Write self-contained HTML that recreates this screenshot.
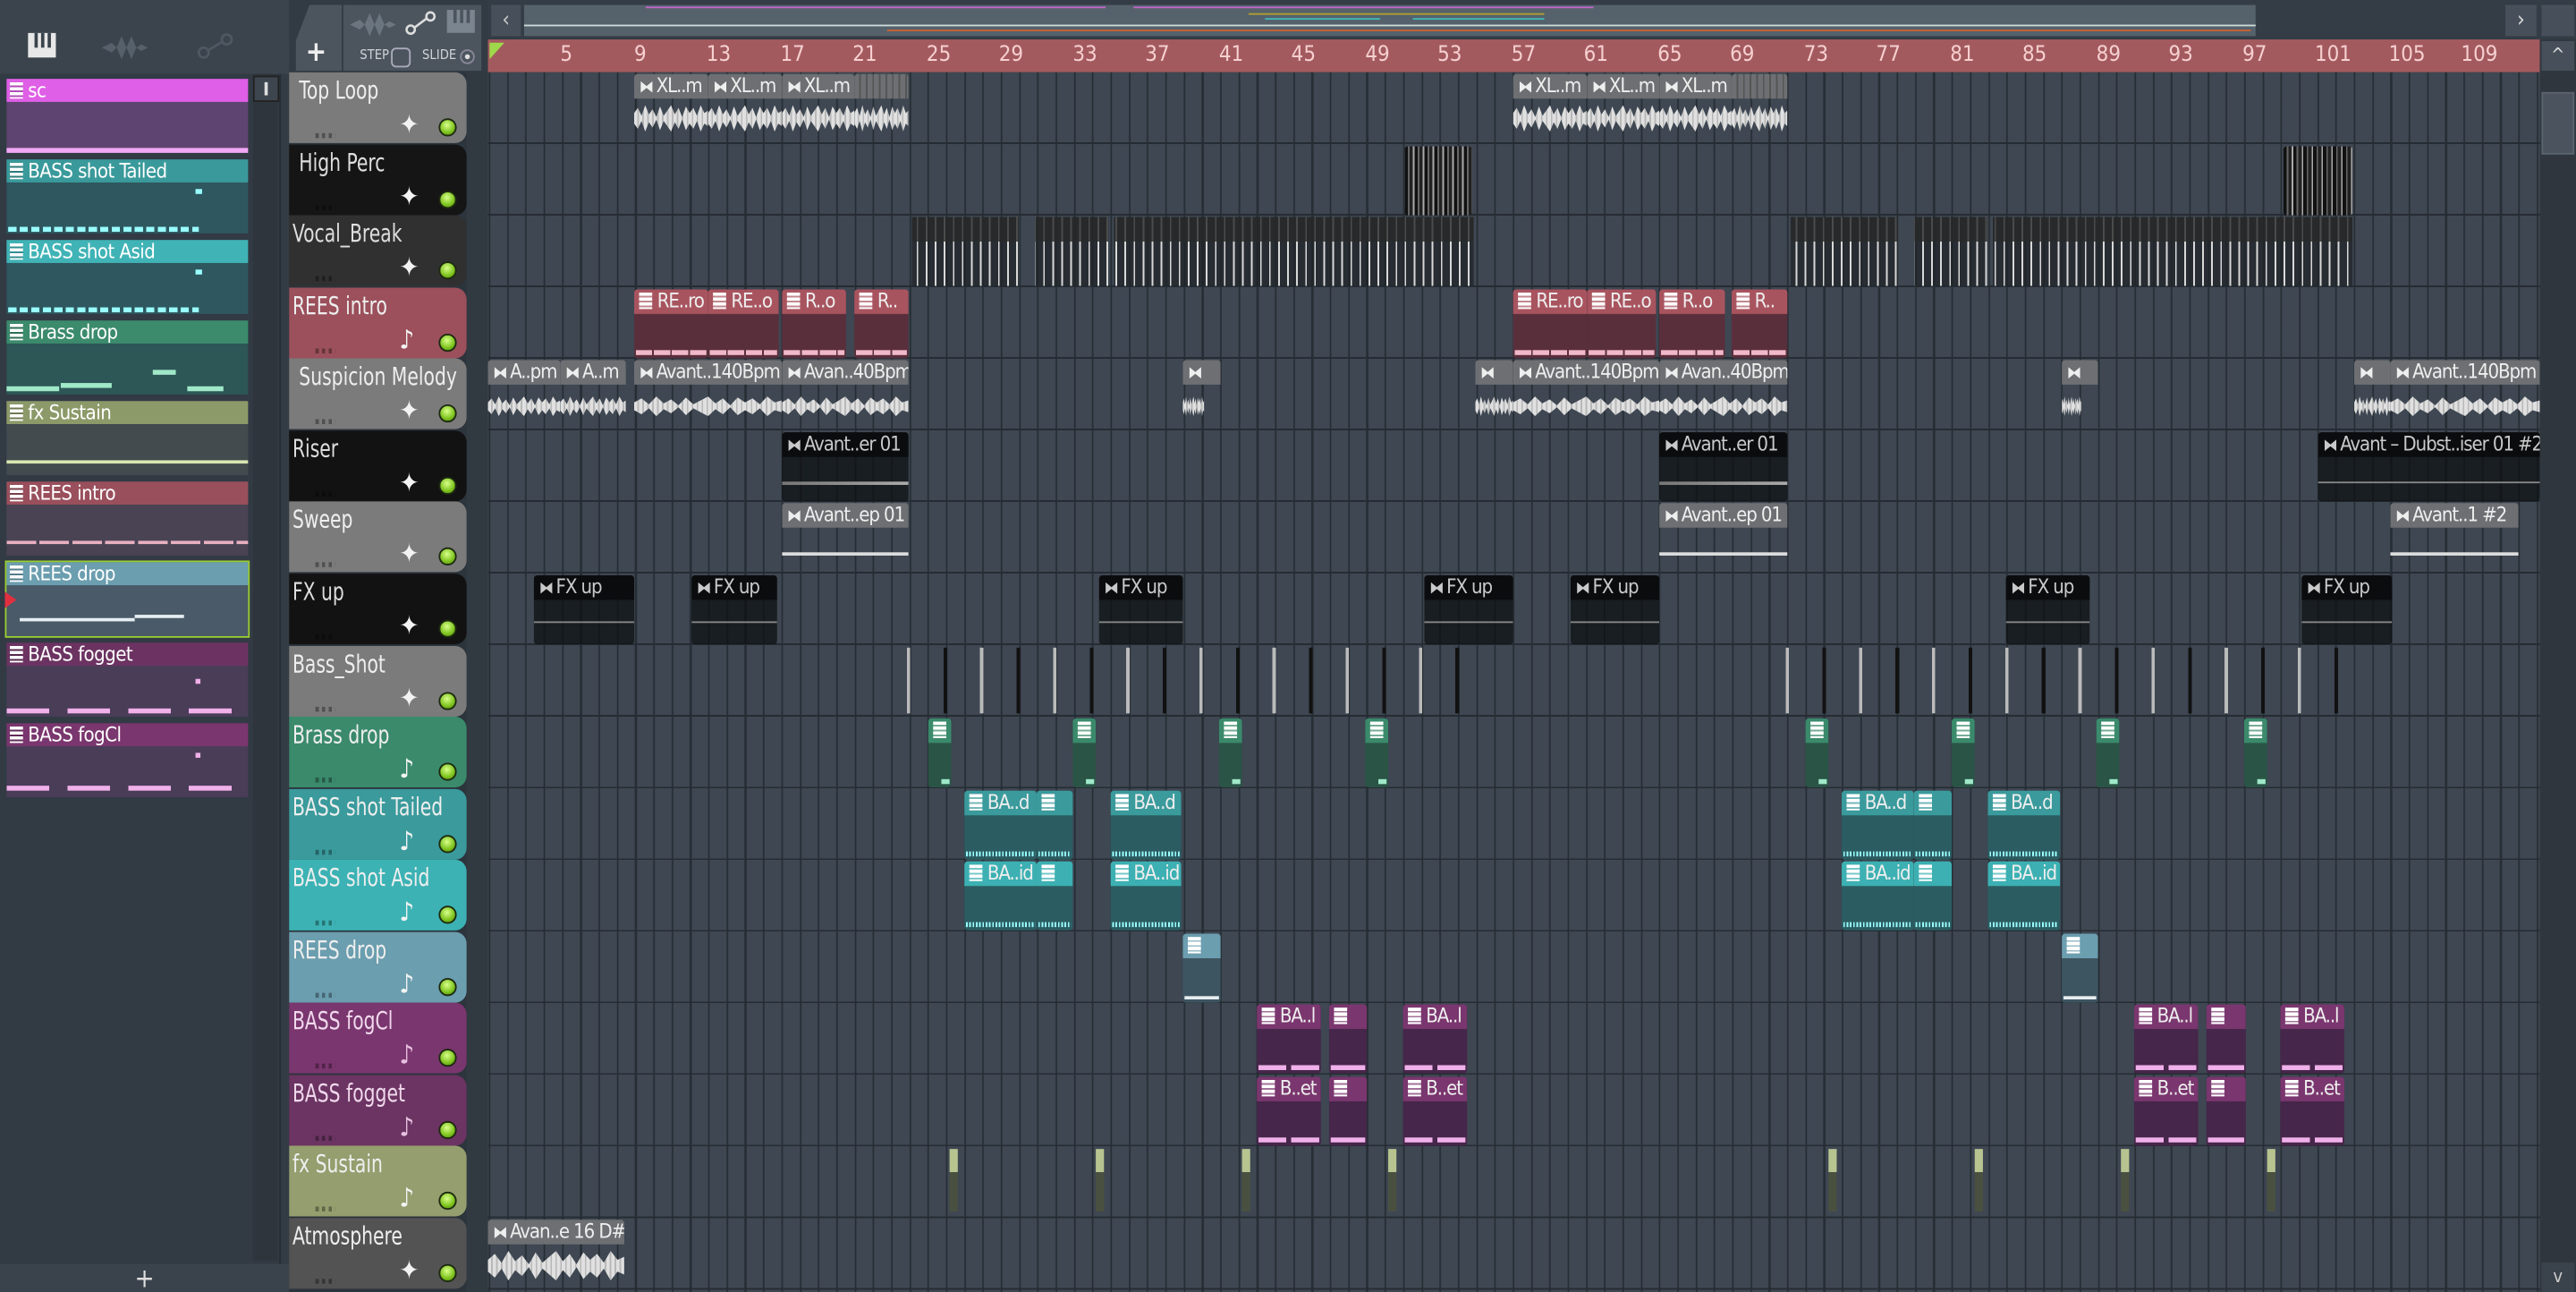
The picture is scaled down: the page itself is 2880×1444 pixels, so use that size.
<!DOCTYPE html>
<html><head><meta charset="utf-8"><style>
html,body{margin:0;padding:0;width:2880px;height:1444px;overflow:hidden;background:#323a43}
#s{position:absolute;left:0;top:0;width:1568px;height:786px;transform:scale(1.83673,1.83715);transform-origin:0 0;font-family:"Liberation Sans Narrow","DejaVu Sans Condensed","Liberation Sans",sans-serif;background:#3a434c;overflow:hidden}
.a{position:absolute}
.grid{position:absolute;left:297px;top:44px;width:1249px;height:742px;background-color:#3e4752;
background-image:repeating-linear-gradient(180deg,transparent 0 42.56px,#262c33 42.56px 43.56px),repeating-linear-gradient(90deg,#262d34 0 1px,transparent 1px 11.13px);background-position:0 0,0.5px 0}
.th{position:absolute;left:176px;width:108px;height:43px;border-radius:0 7px 7px 0;color:#eee;font-size:15px;overflow:hidden}
.th b{position:absolute;left:6px;top:2px;font-weight:normal;white-space:nowrap;transform:scaleX(.82);transform-origin:0 0}
.th i{position:absolute;left:16px;bottom:3px;width:12px;height:3px;background:repeating-linear-gradient(90deg,rgba(0,0,0,.35) 0 2px,transparent 2px 4px)}
.led{position:absolute;left:91px;bottom:4px;width:9px;height:9px;border-radius:50%;background:radial-gradient(circle at 45% 35%,#d8ff8a,#7cc21c 60%,#4a7a10);border:1px solid #1d2a10}
.ic{position:absolute;left:67px;bottom:4px;width:16px;height:14px;color:#f3f3f3;font-size:16px;line-height:14px}
.c{position:absolute;overflow:hidden;border-radius:2px;height:42px;box-sizing:border-box}
.c .h{height:15px;font-size:12px;line-height:15px;color:#eee;padding-left:3px;white-space:nowrap;overflow:hidden;border-radius:2px 2px 0 0;letter-spacing:-0.6px}
.g .h{background:#6d6f72}
.d .h{background:#0b0c0e;color:#c9c9c9}
.d{background:rgba(14,16,19,.75)}
.wv{position:absolute;left:0;right:0;top:19px;height:16px;background:repeating-linear-gradient(90deg,#e0e0e0 0 2px,#b8b8b8 2px 3px);clip-path:polygon(0 30%,5% 10%,10% 40%,15% 0,20% 35%,25% 15%,30% 45%,35% 5%,40% 40%,45% 20%,50% 0,55% 35%,60% 10%,65% 45%,70% 5%,75% 30%,80% 10%,85% 40%,90% 0,95% 30%,100% 20%,100% 80%,95% 70%,90% 100%,85% 60%,80% 90%,75% 70%,70% 95%,65% 55%,60% 90%,55% 65%,50% 100%,45% 80%,40% 60%,35% 95%,30% 55%,25% 85%,20% 65%,15% 100%,10% 60%,5% 90%,0 70%)}
.ar{font-size:10px;margin-right:2px}
.pi{display:inline-block;width:8px;height:10px;vertical-align:-1px;margin-right:3px;background:repeating-linear-gradient(180deg,#fff 0 2px,rgba(255,255,255,.3) 2px 3px)}
.p .b{position:absolute;left:0;right:0;top:15px;bottom:0}
.p .n{position:absolute;left:1px;right:1px;bottom:2px;height:3px}
.ch{position:absolute;left:4px;width:147px;height:45px}
.ch .h{height:14px;font-size:12px;line-height:14px;color:#fff;padding-left:2px;white-space:nowrap;letter-spacing:-0.3px}
.ch .h .pi{width:8px;height:10px;background:repeating-linear-gradient(180deg,#fff 0 2px,rgba(0,0,0,.2) 2px 3px)}
.rl{position:absolute;top:26px;font-size:13px;color:#f6d0d0}
</style></head><body><div id="s">

<div class="a" style="left:0;top:0;width:176px;height:45px;background:#3b444d"></div>
<svg class="a" style="left:17px;top:20px" width="18" height="16"><rect x="0" y="0" width="17" height="15" fill="#e8e8e8"/><rect x="4" y="0" width="2" height="9" fill="#3b444d"/><rect x="8" y="0" width="2" height="9" fill="#3b444d"/><rect x="12" y="0" width="2" height="9" fill="#3b444d"/></svg>
<svg class="a" style="left:62px;top:20px" width="28" height="18"><path d="M0 9 L6 6 L9 9 L12 2 L15 9 L18 16 L21 9 L24 7 L28 9 L24 11 L21 9 L18 2 L15 9 L12 16 L9 9 L6 12Z" fill="#56606a"/></svg>
<svg class="a" style="left:120px;top:20px" width="22" height="16"><circle cx="4" cy="12" r="3" fill="none" stroke="#4e5862" stroke-width="1.5"/><circle cx="18" cy="4" r="3" fill="none" stroke="#4e5862" stroke-width="1.5"/><line x1="6" y1="11" x2="16" y2="5" stroke="#4e5862" stroke-width="1.5"/></svg>

<div class="a" style="left:0;top:45px;width:176px;height:741px;background:#333c45"></div>
<div class="a" style="left:0;top:45px;width:170px;height:724px;background:#323a44;border-right:1px solid #262c33"></div>
<div class="a" style="left:154px;top:45px;width:15px;height:722px;background:#2e353d"></div>
<div class="a" style="left:154px;top:46px;width:14px;height:14px;background:#3d464f;border:1px solid #222"><div class="a" style="left:6px;top:3px;width:2px;height:8px;background:#ddd"></div></div>
<div class="a" style="left:0;top:769px;width:176px;height:17px;background:#3a434c;color:#ddd;font-size:16px;line-height:17px;text-align:center">+</div>

<div class="ch" style="top:48px;background:#5e4470"><div class="h" style="background:#df5fe6"><span class="pi"></span>sc</div><div class="a" style="left:0;right:0;bottom:0;height:3px;background:#f2a8f4"></div></div>
<div class="ch" style="top:97px;background:#2f575f"><div class="h" style="background:#3a9a9b"><span class="pi"></span>BASS shot Tailed</div><div class="a" style="left:1px;right:30px;bottom:1px;height:3px;background:repeating-linear-gradient(90deg,#9ff 0 5px,transparent 5px 7px)"></div><div class="a" style="left:115px;top:18px;width:4px;height:3px;background:#9ff"></div></div>
<div class="ch" style="top:146px;background:#2f575f"><div class="h" style="background:#40b3b6"><span class="pi"></span>BASS shot Asid</div><div class="a" style="left:1px;right:30px;bottom:1px;height:3px;background:repeating-linear-gradient(90deg,#9ff 0 5px,transparent 5px 7px)"></div><div class="a" style="left:115px;top:18px;width:4px;height:3px;background:#9ff"></div></div>
<div class="ch" style="top:195px;background:#2d5656"><div class="h" style="background:#3b8b6c"><span class="pi"></span>Brass drop</div><div class="a" style="left:0;top:40px;width:32px;height:3px;background:#9fe8c8"></div><div class="a" style="left:33px;top:38px;width:31px;height:3px;background:#9fe8c8"></div><div class="a" style="left:89px;top:30px;width:14px;height:3px;background:#9fe8c8"></div><div class="a" style="left:110px;top:40px;width:22px;height:3px;background:#9fe8c8"></div></div>
<div class="ch" style="top:244px;background:#434b4f"><div class="h" style="background:#8c9a69"><span class="pi"></span>fx Sustain</div><div class="a" style="left:0;right:0;top:36px;height:2px;background:#d8e6b0"></div></div>
<div class="ch" style="top:293px;background:#4a4354"><div class="h" style="background:#9a4f5c"><span class="pi"></span>REES intro</div><div class="a" style="left:0;right:0;top:36px;height:2px;background:repeating-linear-gradient(90deg,#e8b0c0 0 18px,transparent 18px 20px)"></div></div>
<div class="ch" style="top:342px;background:#4a5a68;outline:1px solid #9acd32"><div class="h" style="background:#6b9eaf"><span class="pi"></span>REES drop</div><div class="a" style="left:8px;top:34px;width:70px;height:2px;background:#e6eef2"></div><div class="a" style="left:78px;top:32px;width:30px;height:2px;background:#e6eef2"></div><div class="a" style="left:-1px;top:18px;width:0;height:0;border-left:7px solid #e03040;border-top:5px solid transparent;border-bottom:5px solid transparent"></div></div>
<div class="ch" style="top:391px;background:#4a3d58"><div class="h" style="background:#6c3362"><span class="pi"></span>BASS fogget</div><div class="a" style="left:0;right:0;top:40px;height:3px;background:repeating-linear-gradient(90deg,#f0b0ea 0 26px,transparent 26px 37px)"></div><div class="a" style="left:115px;top:22px;width:3px;height:3px;background:#f0b0ea"></div></div>
<div class="ch" style="top:440px;background:#4a3d58"><div class="h" style="background:#7a366e"><span class="pi"></span>BASS fogCl</div><div class="a" style="left:0;right:0;top:38px;height:3px;background:repeating-linear-gradient(90deg,#f0b0ea 0 26px,transparent 26px 37px)"></div><div class="a" style="left:115px;top:18px;width:3px;height:3px;background:#f0b0ea"></div></div>

<div class="a" style="left:176px;top:0;width:121px;height:44px;background:#323a43"></div>
<div class="a" style="left:180px;top:3px;width:28px;height:40px;background:#4c555e;border-radius:8px 0 0 0;clip-path:polygon(30% 0,100% 0,100% 100%,0 100%,0 55%)"></div>
<div class="a" style="left:186px;top:22px;color:#eee;font-size:17px;font-weight:bold">+</div>
<div class="a" style="left:209px;top:3px;width:84px;height:40px;background:#4c555e"></div>
<svg class="a" style="left:213px;top:6px" width="28" height="18"><path d="M0 9 L6 6 L9 9 L12 2 L15 9 L18 16 L21 9 L24 7 L28 9 L24 11 L21 9 L18 2 L15 9 L12 16 L9 9 L6 12Z" fill="#6b757f"/></svg>
<svg class="a" style="left:246px;top:6px" width="20" height="16"><circle cx="4" cy="12" r="2.5" fill="none" stroke="#ddd" stroke-width="1.4"/><circle cx="16" cy="4" r="2.5" fill="none" stroke="#ddd" stroke-width="1.4"/><line x1="6" y1="11" x2="14" y2="5" stroke="#ddd" stroke-width="1.4"/></svg>
<svg class="a" style="left:272px;top:6px" width="18" height="15"><rect width="17" height="14" fill="#7b858f"/><rect x="4" width="2" height="8" fill="#4c555e"/><rect x="8" width="2" height="8" fill="#4c555e"/><rect x="12" width="2" height="8" fill="#4c555e"/></svg>
<div class="a" style="left:219px;top:29px;color:#cfd4d8;font-size:8px">STEP</div>
<div class="a" style="left:238px;top:29px;width:10px;height:10px;border:1px solid #aab;border-radius:3px"></div>
<div class="a" style="left:257px;top:29px;color:#cfd4d8;font-size:8px">SLIDE</div>
<div class="a" style="left:280px;top:30px;width:7px;height:7px;border:1px solid #889;border-radius:50%"><div class="a" style="left:2px;top:2px;width:3px;height:3px;border-radius:50%;background:#ddd"></div></div>

<div class="a" style="left:297px;top:0;width:1271px;height:24px;background:#343c45"></div>
<div class="a" style="left:299px;top:3px;width:18px;height:19px;background:#47505a;color:#ccc;font-size:13px;text-align:center;line-height:19px">‹</div>
<div class="a" style="left:319px;top:3px;width:1054px;height:19px;background:#55616b"></div>
<div class="a" style="left:319px;top:15px;width:1054px;height:1px;background:#cdd"></div>
<div class="a" style="left:393px;top:4px;width:280px;height:1px;background:#c068c8"></div>
<div class="a" style="left:690px;top:4px;width:280px;height:1px;background:#c068c8"></div>
<div class="a" style="left:770px;top:11px;width:70px;height:1px;background:#40b8b8"></div>
<div class="a" style="left:860px;top:11px;width:80px;height:1px;background:#40b8b8"></div>
<div class="a" style="left:760px;top:8px;width:180px;height:1px;background:#b0a030"></div>
<div class="a" style="left:540px;top:18px;width:830px;height:1px;background:#d06030"></div>
<div class="a" style="left:1525px;top:3px;width:19px;height:19px;background:#47505a;color:#ddd;font-size:13px;text-align:center;line-height:19px">›</div>
<div class="a" style="left:1547px;top:3px;width:20px;height:19px;background:#47505a"></div>

<div class="a" style="left:297px;top:24px;width:1249px;height:20px;background:#a35a5f"></div>
<div class="a" style="left:298px;top:26px;width:0;height:0;border-top:10px solid #9fd84a;border-right:9px solid transparent"></div>
<div class="rl" style="left:341px">5</div><div class="rl" style="left:386px">9</div><div class="rl" style="left:430px">13</div><div class="rl" style="left:475px">17</div><div class="rl" style="left:519px">21</div><div class="rl" style="left:564px">25</div><div class="rl" style="left:608px">29</div><div class="rl" style="left:653px">33</div><div class="rl" style="left:697px">37</div><div class="rl" style="left:742px">41</div><div class="rl" style="left:786px">45</div><div class="rl" style="left:831px">49</div><div class="rl" style="left:875px">53</div><div class="rl" style="left:920px">57</div><div class="rl" style="left:964px">61</div><div class="rl" style="left:1009px">65</div><div class="rl" style="left:1053px">69</div><div class="rl" style="left:1098px">73</div><div class="rl" style="left:1142px">77</div><div class="rl" style="left:1187px">81</div><div class="rl" style="left:1231px">85</div><div class="rl" style="left:1276px">89</div><div class="rl" style="left:1320px">93</div><div class="rl" style="left:1365px">97</div><div class="rl" style="left:1409px">101</div><div class="rl" style="left:1454px">105</div><div class="rl" style="left:1498px">109</div>

<div class="a" style="left:1546px;top:24px;width:22px;height:762px;background:#2f363e"></div>
<div class="a" style="left:1547px;top:25px;width:20px;height:18px;background:#47505a;color:#ddd;font-size:11px;text-align:center;line-height:18px">^</div>
<div class="a" style="left:1547px;top:56px;width:20px;height:38px;background:#4b545e;border:1px solid #5a646e;box-sizing:border-box"></div>
<div class="a" style="left:1547px;top:768px;width:20px;height:18px;background:#3a424b;color:#ccc;font-size:11px;text-align:center;line-height:18px">v</div>

<div class="a" style="left:176px;top:44px;width:121px;height:742px;background:#2c343c"></div>
<div class="a" style="left:284px;top:44px;width:13px;height:742px;background:#313941"></div>

<div class="th" style="top:44px;background:#7b7b7b"><b>Top Loop</b><span class="ic">✦</span><i></i><span class="led"></span></div>
<div class="th" style="top:87.6px;background:#151515;color:#ddd"><b>High Perc</b><span class="ic">✦</span><i></i><span class="led"></span></div>
<div class="th" style="top:131.1px;background:#303030;color:#ddd"><b style="left:2px">Vocal_Break</b><span class="ic">✦</span><i></i><span class="led"></span></div>
<div class="th" style="top:174.7px;background:#9b505b"><b style="left:2px">REES intro</b><span class="ic">♪</span><i></i><span class="led"></span></div>
<div class="th" style="top:218.2px;background:#7b7b7b"><b>Suspicion Melody</b><span class="ic">✦</span><i></i><span class="led"></span></div>
<div class="th" style="top:261.8px;background:#121212;color:#ddd"><b style="left:2px">Riser</b><span class="ic">✦</span><i></i><span class="led"></span></div>
<div class="th" style="top:305.4px;background:#7b7b7b"><b style="left:2px">Sweep</b><span class="ic">✦</span><i></i><span class="led"></span></div>
<div class="th" style="top:348.9px;background:#121212;color:#ddd"><b style="left:2px">FX up</b><span class="ic">✦</span><i></i><span class="led"></span></div>
<div class="th" style="top:392.5px;background:#7b7b7b"><b style="left:2px">Bass_Shot</b><span class="ic">✦</span><i></i><span class="led"></span></div>
<div class="th" style="top:436px;background:#3a8a6b"><b style="left:2px">Brass drop</b><span class="ic">♪</span><i></i><span class="led"></span></div>
<div class="th" style="top:479.6px;background:#3a9a9c"><b style="left:2px">BASS shot Tailed</b><span class="ic">♪</span><i></i><span class="led"></span></div>
<div class="th" style="top:523.2px;background:#3cb2b4"><b style="left:2px">BASS shot Asid</b><span class="ic">♪</span><i></i><span class="led"></span></div>
<div class="th" style="top:566.7px;background:#6b9eaf"><b style="left:2px">REES drop</b><span class="ic">♪</span><i></i><span class="led"></span></div>
<div class="th" style="top:610.3px;background:#7a366e;color:#f0d8ec"><b style="left:2px">BASS fogCl</b><span class="ic" style="color:#e8c0e0">♪</span><i></i><span class="led"></span></div>
<div class="th" style="top:653.8px;background:#6b3462;color:#f0d8ec"><b style="left:2px">BASS fogget</b><span class="ic" style="color:#e8c0e0">♪</span><i></i><span class="led"></span></div>
<div class="th" style="top:697.4px;background:#949e6e"><b style="left:2px">fx Sustain</b><span class="ic">♪</span><i></i><span class="led"></span></div>
<div class="th" style="top:741px;background:#535353"><b style="left:2px">Atmosphere</b><span class="ic">✦</span><i></i><span class="led"></span></div>

<div class="grid"></div>

<div class="c g" style="left:386px;top:45px;width:45px"><div class="h"><span class="ar">⧓</span>XL..m</div><div class="wv"></div></div>
<div class="c g" style="left:431px;top:45px;width:45px"><div class="h"><span class="ar">⧓</span>XL..m</div><div class="wv"></div></div>
<div class="c g" style="left:476px;top:45px;width:44px"><div class="h"><span class="ar">⧓</span>XL..m</div><div class="wv"></div></div>
<div class="c g" style="left:520px;top:45px;width:33px"><div class="h" style="background:repeating-linear-gradient(90deg,#6d6f72 0 3px,#555 3px 4px)"></div><div class="wv"></div></div>
<div class="c g" style="left:921px;top:45px;width:45px"><div class="h"><span class="ar">⧓</span>XL..m</div><div class="wv"></div></div>
<div class="c g" style="left:966px;top:45px;width:44px"><div class="h"><span class="ar">⧓</span>XL..m</div><div class="wv"></div></div>
<div class="c g" style="left:1010px;top:45px;width:44px"><div class="h"><span class="ar">⧓</span>XL..m</div><div class="wv"></div></div>
<div class="c g" style="left:1054px;top:45px;width:34px"><div class="h" style="background:repeating-linear-gradient(90deg,#6d6f72 0 3px,#555 3px 4px)"></div><div class="wv"></div></div>

<div class="c" style="left:855px;top:88.6px;width:41px;background:repeating-linear-gradient(90deg,#111 0 2px,#666 2px 3px,#222 3px 5px,#aaa 5px 6px)"></div>
<div class="c" style="left:1390px;top:88.6px;width:42px;background:repeating-linear-gradient(90deg,#111 0 2px,#666 2px 3px,#222 3px 5px,#aaa 5px 6px)"></div>

<div class="a" style="left:555px;top:132px;width:342px;height:42px;background:linear-gradient(180deg,rgba(40,40,40,.8) 0 15px,transparent 15px),repeating-linear-gradient(90deg,rgba(30,34,38,.7) 0 3px,#d8d8d8 3px 4px,rgba(30,34,38,.7) 4px 5.5px);clip-path:polygon(0 0,19% 0,19% 100%,22% 100%,22% 0,35% 0,35% 100%,36% 100%,36% 0,100% 0,100% 100%,0 100%)"></div>
<div class="a" style="left:1090px;top:132px;width:342px;height:42px;background:linear-gradient(180deg,rgba(40,40,40,.8) 0 15px,transparent 15px),repeating-linear-gradient(90deg,rgba(30,34,38,.7) 0 3px,#d8d8d8 3px 4px,rgba(30,34,38,.7) 4px 5.5px);clip-path:polygon(0 0,19% 0,19% 100%,22% 100%,22% 0,35% 0,35% 100%,36% 100%,36% 0,100% 0,100% 100%,0 100%)"></div>

<div class="c p" style="left:386px;top:175.7px;width:45px;background:#5a2f3c"><div class="h" style="background:#a8545f"><span class="pi"></span>RE..ro</div><div class="n" style="background:repeating-linear-gradient(90deg,#f0b8c8 0 10px,transparent 10px 11px)"></div></div>
<div class="c p" style="left:431px;top:175.7px;width:43px;background:#5a2f3c"><div class="h" style="background:#a8545f"><span class="pi"></span>RE..o</div><div class="n" style="background:repeating-linear-gradient(90deg,#f0b8c8 0 10px,transparent 10px 11px)"></div></div>
<div class="c p" style="left:476px;top:175.7px;width:39px;background:#5a2f3c"><div class="h" style="background:#a8545f"><span class="pi"></span>R..o</div><div class="n" style="background:repeating-linear-gradient(90deg,#f0b8c8 0 10px,transparent 10px 11px)"></div></div>
<div class="c p" style="left:520px;top:175.7px;width:33px;background:#5a2f3c"><div class="h" style="background:#a8545f"><span class="pi"></span>R..</div><div class="n" style="background:repeating-linear-gradient(90deg,#f0b8c8 0 10px,transparent 10px 11px)"></div></div>
<div class="c p" style="left:921px;top:175.7px;width:45px;background:#5a2f3c"><div class="h" style="background:#a8545f"><span class="pi"></span>RE..ro</div><div class="n" style="background:repeating-linear-gradient(90deg,#f0b8c8 0 10px,transparent 10px 11px)"></div></div>
<div class="c p" style="left:966px;top:175.7px;width:42px;background:#5a2f3c"><div class="h" style="background:#a8545f"><span class="pi"></span>RE..o</div><div class="n" style="background:repeating-linear-gradient(90deg,#f0b8c8 0 10px,transparent 10px 11px)"></div></div>
<div class="c p" style="left:1010px;top:175.7px;width:40px;background:#5a2f3c"><div class="h" style="background:#a8545f"><span class="pi"></span>R..o</div><div class="n" style="background:repeating-linear-gradient(90deg,#f0b8c8 0 10px,transparent 10px 11px)"></div></div>
<div class="c p" style="left:1054px;top:175.7px;width:34px;background:#5a2f3c"><div class="h" style="background:#a8545f"><span class="pi"></span>R..</div><div class="n" style="background:repeating-linear-gradient(90deg,#f0b8c8 0 10px,transparent 10px 11px)"></div></div>

<div class="c g" style="left:297px;top:219.2px;width:44px"><div class="h"><span class="ar">⧓</span>A..pm</div><div class="wv" style="top:22px;height:12px"></div></div>
<div class="c g" style="left:341px;top:219.2px;width:40px"><div class="h"><span class="ar">⧓</span>A..m</div><div class="wv" style="top:22px;height:12px"></div></div>
<div class="c g" style="left:386px;top:219.2px;width:90px"><div class="h"><span class="ar">⧓</span>Avant..140Bpm</div><div class="wv" style="top:22px;height:12px"></div></div>
<div class="c g" style="left:476px;top:219.2px;width:77px"><div class="h"><span class="ar">⧓</span>Avan..40Bpm</div><div class="wv" style="top:22px;height:12px"></div></div>
<div class="c g" style="left:720px;top:219.2px;width:23px"><div class="h"><span class="ar">⧓</span></div><div class="wv" style="top:22px;height:12px;right:10px"></div></div>
<div class="c g" style="left:898px;top:219.2px;width:23px"><div class="h"><span class="ar">⧓</span></div><div class="wv" style="top:22px;height:12px"></div></div>
<div class="c g" style="left:921px;top:219.2px;width:89px"><div class="h"><span class="ar">⧓</span>Avant..140Bpm</div><div class="wv" style="top:22px;height:12px"></div></div>
<div class="c g" style="left:1010px;top:219.2px;width:78px"><div class="h"><span class="ar">⧓</span>Avan..40Bpm</div><div class="wv" style="top:22px;height:12px"></div></div>
<div class="c g" style="left:1255px;top:219.2px;width:22px"><div class="h"><span class="ar">⧓</span></div><div class="wv" style="top:22px;height:12px;right:10px"></div></div>
<div class="c g" style="left:1433px;top:219.2px;width:22px"><div class="h"><span class="ar">⧓</span></div><div class="wv" style="top:22px;height:12px"></div></div>
<div class="c g" style="left:1455px;top:219.2px;width:91px"><div class="h"><span class="ar">⧓</span>Avant..140Bpm</div><div class="wv" style="top:22px;height:12px"></div></div>

<div class="c d" style="left:476px;top:262.8px;width:77px"><div class="h"><span class="ar">⧓</span>Avant..er 01</div><div class="a" style="left:0;right:0;top:30px;height:2px;background:linear-gradient(90deg,#777,#aaa)"></div></div>
<div class="c d" style="left:1010px;top:262.8px;width:78px"><div class="h"><span class="ar">⧓</span>Avant..er 01</div><div class="a" style="left:0;right:0;top:30px;height:2px;background:linear-gradient(90deg,#777,#aaa)"></div></div>
<div class="c d" style="left:1411px;top:262.8px;width:135px"><div class="h"><span class="ar">⧓</span>Avant – Dubst..iser 01 #2</div><div class="a" style="left:0;right:0;top:30px;height:1px;background:#888"></div></div>

<div class="c g" style="left:476px;top:306.4px;width:77px"><div class="h"><span class="ar">⧓</span>Avant..ep 01</div><div class="a" style="left:0;right:0;top:30px;height:2px;background:#ddd"></div></div>
<div class="c g" style="left:1010px;top:306.4px;width:78px"><div class="h"><span class="ar">⧓</span>Avant..ep 01</div><div class="a" style="left:0;right:0;top:30px;height:2px;background:#ddd"></div></div>
<div class="c g" style="left:1455px;top:306.4px;width:78px"><div class="h"><span class="ar">⧓</span>Avant..1 #2</div><div class="a" style="left:0;right:0;top:30px;height:2px;background:#ddd"></div></div>

<div class="c d" style="left:325px;top:349.9px;width:61px"><div class="h"><span class="ar">⧓</span>FX up</div><div class="a" style="left:0;right:0;top:28px;height:1px;background:#888"></div></div>
<div class="c d" style="left:421px;top:349.9px;width:52px"><div class="h"><span class="ar">⧓</span>FX up</div><div class="a" style="left:0;right:0;top:28px;height:1px;background:#888"></div></div>
<div class="c d" style="left:669px;top:349.9px;width:51px"><div class="h"><span class="ar">⧓</span>FX up</div><div class="a" style="left:0;right:0;top:28px;height:1px;background:#888"></div></div>
<div class="c d" style="left:867px;top:349.9px;width:54px"><div class="h"><span class="ar">⧓</span>FX up</div><div class="a" style="left:0;right:0;top:28px;height:1px;background:#888"></div></div>
<div class="c d" style="left:956px;top:349.9px;width:54px"><div class="h"><span class="ar">⧓</span>FX up</div><div class="a" style="left:0;right:0;top:28px;height:1px;background:#888"></div></div>
<div class="c d" style="left:1221px;top:349.9px;width:51px"><div class="h"><span class="ar">⧓</span>FX up</div><div class="a" style="left:0;right:0;top:28px;height:1px;background:#888"></div></div>
<div class="c d" style="left:1401px;top:349.9px;width:55px"><div class="h"><span class="ar">⧓</span>FX up</div><div class="a" style="left:0;right:0;top:28px;height:1px;background:#888"></div></div>

<div class="a" style="left:552px;top:394px;width:346px;height:40px;background:repeating-linear-gradient(90deg,#bbb 0 2px,transparent 2px 22.26px,#111 22.26px 24.5px,transparent 24.5px 44.52px)"></div>
<div class="a" style="left:1087px;top:394px;width:346px;height:40px;background:repeating-linear-gradient(90deg,#bbb 0 2px,transparent 2px 22.26px,#111 22.26px 24.5px,transparent 24.5px 44.52px)"></div>

<div class="c p" style="left:565px;top:437px;width:14px;background:#2a5446"><div class="h" style="background:#3a8a6b"><span class="pi"></span></div><div class="n" style="background:#9fe8c8;width:5px;left:auto"></div></div>
<div class="c p" style="left:653px;top:437px;width:14px;background:#2a5446"><div class="h" style="background:#3a8a6b"><span class="pi"></span></div><div class="n" style="background:#9fe8c8;width:5px;left:auto"></div></div>
<div class="c p" style="left:742px;top:437px;width:14px;background:#2a5446"><div class="h" style="background:#3a8a6b"><span class="pi"></span></div><div class="n" style="background:#9fe8c8;width:5px;left:auto"></div></div>
<div class="c p" style="left:831px;top:437px;width:14px;background:#2a5446"><div class="h" style="background:#3a8a6b"><span class="pi"></span></div><div class="n" style="background:#9fe8c8;width:5px;left:auto"></div></div>
<div class="c p" style="left:1099px;top:437px;width:14px;background:#2a5446"><div class="h" style="background:#3a8a6b"><span class="pi"></span></div><div class="n" style="background:#9fe8c8;width:5px;left:auto"></div></div>
<div class="c p" style="left:1188px;top:437px;width:14px;background:#2a5446"><div class="h" style="background:#3a8a6b"><span class="pi"></span></div><div class="n" style="background:#9fe8c8;width:5px;left:auto"></div></div>
<div class="c p" style="left:1276px;top:437px;width:14px;background:#2a5446"><div class="h" style="background:#3a8a6b"><span class="pi"></span></div><div class="n" style="background:#9fe8c8;width:5px;left:auto"></div></div>
<div class="c p" style="left:1366px;top:437px;width:14px;background:#2a5446"><div class="h" style="background:#3a8a6b"><span class="pi"></span></div><div class="n" style="background:#9fe8c8;width:5px;left:auto"></div></div>

<div class="c p" style="left:587px;top:480.6px;width:44px;background:#2b5c62"><div class="h" style="background:#3a9a9c"><span class="pi"></span>BA..d</div><div class="n" style="background:repeating-linear-gradient(90deg,#9ff 0 1px,transparent 1px 2px)"></div></div>
<div class="c p" style="left:631px;top:480.6px;width:22px;background:#2b5c62"><div class="h" style="background:#3a9a9c"><span class="pi"></span></div><div class="n" style="background:repeating-linear-gradient(90deg,#9ff 0 1px,transparent 1px 2px)"></div></div>
<div class="c p" style="left:676px;top:480.6px;width:43px;background:#2b5c62"><div class="h" style="background:#3a9a9c"><span class="pi"></span>BA..d</div><div class="n" style="background:repeating-linear-gradient(90deg,#9ff 0 1px,transparent 1px 2px)"></div></div>
<div class="c p" style="left:1121px;top:480.6px;width:44px;background:#2b5c62"><div class="h" style="background:#3a9a9c"><span class="pi"></span>BA..d</div><div class="n" style="background:repeating-linear-gradient(90deg,#9ff 0 1px,transparent 1px 2px)"></div></div>
<div class="c p" style="left:1165px;top:480.6px;width:23px;background:#2b5c62"><div class="h" style="background:#3a9a9c"><span class="pi"></span></div><div class="n" style="background:repeating-linear-gradient(90deg,#9ff 0 1px,transparent 1px 2px)"></div></div>
<div class="c p" style="left:1210px;top:480.6px;width:44px;background:#2b5c62"><div class="h" style="background:#3a9a9c"><span class="pi"></span>BA..d</div><div class="n" style="background:repeating-linear-gradient(90deg,#9ff 0 1px,transparent 1px 2px)"></div></div>

<div class="c p" style="left:587px;top:524.2px;width:44px;background:#2b5c62"><div class="h" style="background:#3cb0b2"><span class="pi"></span>BA..id</div><div class="n" style="background:repeating-linear-gradient(90deg,#9ff 0 1px,transparent 1px 2px)"></div></div>
<div class="c p" style="left:631px;top:524.2px;width:22px;background:#2b5c62"><div class="h" style="background:#3cb0b2"><span class="pi"></span></div><div class="n" style="background:repeating-linear-gradient(90deg,#9ff 0 1px,transparent 1px 2px)"></div></div>
<div class="c p" style="left:676px;top:524.2px;width:43px;background:#2b5c62"><div class="h" style="background:#3cb0b2"><span class="pi"></span>BA..id</div><div class="n" style="background:repeating-linear-gradient(90deg,#9ff 0 1px,transparent 1px 2px)"></div></div>
<div class="c p" style="left:1121px;top:524.2px;width:44px;background:#2b5c62"><div class="h" style="background:#3cb0b2"><span class="pi"></span>BA..id</div><div class="n" style="background:repeating-linear-gradient(90deg,#9ff 0 1px,transparent 1px 2px)"></div></div>
<div class="c p" style="left:1165px;top:524.2px;width:23px;background:#2b5c62"><div class="h" style="background:#3cb0b2"><span class="pi"></span></div><div class="n" style="background:repeating-linear-gradient(90deg,#9ff 0 1px,transparent 1px 2px)"></div></div>
<div class="c p" style="left:1210px;top:524.2px;width:44px;background:#2b5c62"><div class="h" style="background:#3cb0b2"><span class="pi"></span>BA..id</div><div class="n" style="background:repeating-linear-gradient(90deg,#9ff 0 1px,transparent 1px 2px)"></div></div>

<div class="c p" style="left:720px;top:567.7px;width:23px;background:#3d5560"><div class="h" style="background:#6b9eaf"><span class="pi"></span></div><div class="n" style="background:#e6eef2;height:2px"></div></div>
<div class="c p" style="left:1255px;top:567.7px;width:22px;background:#3d5560"><div class="h" style="background:#6b9eaf"><span class="pi"></span></div><div class="n" style="background:#e6eef2;height:2px"></div></div>

<div class="c p" style="left:765px;top:611.3px;width:39px;background:#46264a"><div class="h" style="background:#7a366e"><span class="pi"></span>BA..l</div><div class="n" style="background:repeating-linear-gradient(90deg,#f0b0ea 0 17px,transparent 17px 20px)"></div></div>
<div class="c p" style="left:809px;top:611.3px;width:23px;background:#46264a"><div class="h" style="background:#7a366e"><span class="pi"></span></div><div class="n" style="background:#f0b0ea"></div></div>
<div class="c p" style="left:854px;top:611.3px;width:39px;background:#46264a"><div class="h" style="background:#7a366e"><span class="pi"></span>BA..l</div><div class="n" style="background:repeating-linear-gradient(90deg,#f0b0ea 0 17px,transparent 17px 20px)"></div></div>
<div class="c p" style="left:1299px;top:611.3px;width:39px;background:#46264a"><div class="h" style="background:#7a366e"><span class="pi"></span>BA..l</div><div class="n" style="background:repeating-linear-gradient(90deg,#f0b0ea 0 17px,transparent 17px 20px)"></div></div>
<div class="c p" style="left:1343px;top:611.3px;width:24px;background:#46264a"><div class="h" style="background:#7a366e"><span class="pi"></span></div><div class="n" style="background:#f0b0ea"></div></div>
<div class="c p" style="left:1388px;top:611.3px;width:39px;background:#46264a"><div class="h" style="background:#7a366e"><span class="pi"></span>BA..l</div><div class="n" style="background:repeating-linear-gradient(90deg,#f0b0ea 0 17px,transparent 17px 20px)"></div></div>

<div class="c p" style="left:765px;top:654.8px;width:39px;background:#46264a"><div class="h" style="background:#7a366e"><span class="pi"></span>B..et</div><div class="n" style="background:repeating-linear-gradient(90deg,#f0b0ea 0 17px,transparent 17px 20px)"></div></div>
<div class="c p" style="left:809px;top:654.8px;width:23px;background:#46264a"><div class="h" style="background:#7a366e"><span class="pi"></span></div><div class="n" style="background:#f0b0ea"></div></div>
<div class="c p" style="left:854px;top:654.8px;width:39px;background:#46264a"><div class="h" style="background:#7a366e"><span class="pi"></span>B..et</div><div class="n" style="background:repeating-linear-gradient(90deg,#f0b0ea 0 17px,transparent 17px 20px)"></div></div>
<div class="c p" style="left:1299px;top:654.8px;width:39px;background:#46264a"><div class="h" style="background:#7a366e"><span class="pi"></span>B..et</div><div class="n" style="background:repeating-linear-gradient(90deg,#f0b0ea 0 17px,transparent 17px 20px)"></div></div>
<div class="c p" style="left:1343px;top:654.8px;width:24px;background:#46264a"><div class="h" style="background:#7a366e"><span class="pi"></span></div><div class="n" style="background:#f0b0ea"></div></div>
<div class="c p" style="left:1388px;top:654.8px;width:39px;background:#46264a"><div class="h" style="background:#7a366e"><span class="pi"></span>B..et</div><div class="n" style="background:repeating-linear-gradient(90deg,#f0b0ea 0 17px,transparent 17px 20px)"></div></div>

<div class="a" style="left:578px;top:699px;width:5px;height:38px;background:linear-gradient(180deg,#b8c490 0 14px,#4a5040 14px)"></div>
<div class="a" style="left:667px;top:699px;width:5px;height:38px;background:linear-gradient(180deg,#b8c490 0 14px,#4a5040 14px)"></div>
<div class="a" style="left:756px;top:699px;width:5px;height:38px;background:linear-gradient(180deg,#b8c490 0 14px,#4a5040 14px)"></div>
<div class="a" style="left:845px;top:699px;width:5px;height:38px;background:linear-gradient(180deg,#b8c490 0 14px,#4a5040 14px)"></div>
<div class="a" style="left:1113px;top:699px;width:5px;height:38px;background:linear-gradient(180deg,#b8c490 0 14px,#4a5040 14px)"></div>
<div class="a" style="left:1202px;top:699px;width:5px;height:38px;background:linear-gradient(180deg,#b8c490 0 14px,#4a5040 14px)"></div>
<div class="a" style="left:1291px;top:699px;width:5px;height:38px;background:linear-gradient(180deg,#b8c490 0 14px,#4a5040 14px)"></div>
<div class="a" style="left:1380px;top:699px;width:5px;height:38px;background:linear-gradient(180deg,#b8c490 0 14px,#4a5040 14px)"></div>

<div class="c g" style="left:297px;top:742px;width:83px;height:44px"><div class="h"><span class="ar">⧓</span>Avan..e 16 D#</div><div class="wv" style="top:19px;height:18px"></div></div>

</div></body></html>
